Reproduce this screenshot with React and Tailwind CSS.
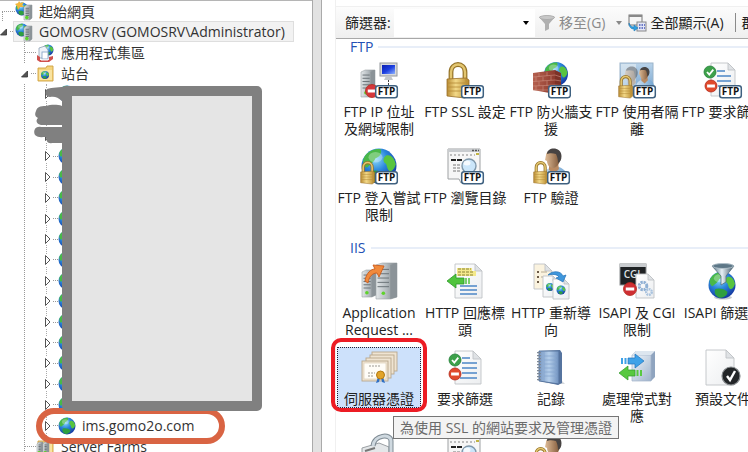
import React from "react";

const FONT =
  "font-['Open_Sans','Noto_Sans_CJK_TC',sans-serif]";

/* ---------- shared drawing parts ---------- */

function Defs() {
  return (
    <svg className="absolute h-0 w-0" aria-hidden="true">
      <defs>
        <radialGradient id="globe" cx="0.4" cy="0.3" r="0.75">
          <stop offset="0" stopColor="#8fdcf9" />
          <stop offset="0.45" stopColor="#2a86dc" />
          <stop offset="1" stopColor="#12309a" />
        </radialGradient>
        <linearGradient id="gold" x1="0" x2="1">
          <stop offset="0" stopColor="#b98c34" />
          <stop offset="0.4" stopColor="#f3d988" />
          <stop offset="1" stopColor="#b5872c" />
        </linearGradient>
        <linearGradient id="steel" x1="0" x2="1">
          <stop offset="0" stopColor="#e3e7e9" />
          <stop offset="0.5" stopColor="#b4bbbf" />
          <stop offset="1" stopColor="#7a8287" />
        </linearGradient>
        <linearGradient id="screen" x1="0" x2="1" y2="1">
          <stop offset="0" stopColor="#0b1fb0" />
          <stop offset="0.5" stopColor="#1c3fe0" />
          <stop offset="1" stopColor="#8fb4ff" />
        </linearGradient>
        <linearGradient id="brick" x1="0" x2="1">
          <stop offset="0" stopColor="#b5604f" />
          <stop offset="1" stopColor="#8d3b2e" />
        </linearGradient>
        <linearGradient id="paper" x1="0" y1="0" x2="1" y2="1">
          <stop offset="0" stopColor="#ffffff" />
          <stop offset="1" stopColor="#eceef0" />
        </linearGradient>
        <linearGradient id="sky" x1="0" y1="0" x2="0" y2="1">
          <stop offset="0" stopColor="#b9d3ea" />
          <stop offset="1" stopColor="#6f9fcb" />
        </linearGradient>
        <linearGradient id="skin" x1="0" x2="1">
          <stop offset="0" stopColor="#e0bd98" />
          <stop offset="1" stopColor="#7b5334" />
        </linearGradient>
        <linearGradient id="shirt" x1="0" x2="1">
          <stop offset="0" stopColor="#cfe2f2" />
          <stop offset="1" stopColor="#6fa3d2" />
        </linearGradient>
        <linearGradient id="book" x1="0" x2="1">
          <stop offset="0" stopColor="#7797c2" />
          <stop offset="0.5" stopColor="#b5cfeb" />
          <stop offset="1" stopColor="#6d8fbd" />
        </linearGradient>
        <linearGradient id="box" x1="0" x2="1" y2="1">
          <stop offset="0" stopColor="#f3f7fb" />
          <stop offset="1" stopColor="#9fb3cc" />
        </linearGradient>
        <linearGradient id="funnel" x1="0" x2="1">
          <stop offset="0" stopColor="#4b6a7c" />
          <stop offset="0.45" stopColor="#e6eff4" />
          <stop offset="1" stopColor="#3c5566" />
        </linearGradient>
      </defs>
    </svg>
  );
}

function Globe({ cx, cy, r }) {
  return (
    <g transform={`translate(${cx} ${cy}) scale(${r / 10})`}>
      <circle r="10" fill="url(#globe)" />
      <path d="M-8.500-5C-6-9-2-10 1-9.600 2-7 0-5-2-4.500-3-2-5-1-7 1-9 0-9.600-3-8.500-5Z" fill="#49b848" />
      <path d="M4-6C7-7 9-4 9.600-1 9 1 8 3 6 3 4 1 5-1 3-2 2-4 3-5 4-6Z" fill="#58c43f" />
      <path d="M-5 3C-2 2 2 3 4 5 4 8 1 9.500-2 9.500-5 8-6 6-5 3Z" fill="#2f9f3f" />
      <ellipse cx="-2" cy="-5" rx="4" ry="3" fill="#fff" opacity="0.3" />
    </g>
  );
}

function Lock({ x, y, s = 1 }) {
  return (
    <g transform={`translate(${x} ${y}) scale(${s})`}>
      <path d="M5 18V10C5 0 19 0 19 10V18" fill="none" stroke="#957328" strokeWidth="4.800" />
      <path d="M5 18V10C5 0 19 0 19 10V18" fill="none" stroke="#e3c670" strokeWidth="2.400" />
      <path d="M1 17 20 16 23 18V33L19 36 1 34Z" fill="url(#gold)" stroke="#9a7028" strokeWidth="0.800" />
      <path d="M2 21H19M2 25H19M2 29H19M20 17V35" stroke="#b58c38" strokeWidth="0.800" />
    </g>
  );
}

function Ftp({ x = 16 }) {
  return (
    <g>
      <rect x={x + 0.7} y="25.700" width="21.600" height="12" rx="2.500" fill="#fff" stroke="#3f6180" strokeWidth="1.500" />
      <text x={x + 11.5} y="35.400" textAnchor="middle" fontSize="10" fontWeight="700" fontFamily="Open Sans" fill="#111">
        FTP
      </text>
    </g>
  );
}

function Page({ x, y, w, h, fold = 7, fill = "url(#paper)" }) {
  return (
    <g stroke="#bfc3c6" strokeWidth="0.900">
      <path d={`M${x} ${y}H${x + w - fold}L${x + w} ${y + fold}V${y + h}H${x}Z`} fill={fill} />
      <path d={`M${x + w - fold} ${y}V${y + fold}H${x + w}Z`} fill="#dfe2e5" />
    </g>
  );
}

function Ok({ cx, cy, r = 6 }) {
  return (
    <g>
      <circle cx={cx} cy={cy} r={r} fill="#3da14a" stroke="#23803a" strokeWidth="0.800" />
      <path d={`M${cx - 3} ${cy}l2.300 2.600 4-5`} fill="none" stroke="#fff" strokeWidth="1.800" />
    </g>
  );
}

function Stop({ cx, cy, r = 6, fill = "#e04a2c" }) {
  return (
    <g>
      <circle cx={cx} cy={cy} r={r} fill={fill} stroke="#b32a1c" strokeWidth="0.800" />
      <rect x={cx - r * 0.65} y={cy - 1.5} width={r * 1.3} height="3" fill="#fff" />
    </g>
  );
}

function Tower({ x, y, w, h }) {
  return (
    <g>
      <path d={`M${x} ${y + 2}L${x + w * 0.3} ${y}H${x + w}V${y + h - 2}L${x + w * 0.7} ${y + h}H${x}Z`} fill="url(#steel)" stroke="#9aa1a5" strokeWidth="0.600" />
      <path d={`M${x + w * 0.68} ${y + 2}L${x + w} ${y}V${y + h - 2}L${x + w * 0.68} ${y + h}Z`} fill="#8b9398" />
      {[0.15, 0.27, 0.39, 0.51, 0.63].map((k) => (
        <path key={k} d={`M${x + 1.5} ${y + h * k + 1}H${x + w * 0.62}`} stroke="#6c7479" strokeWidth="1" />
      ))}
      <circle cx={x + w * 0.35} cy={y + h * 0.84} r="1.800" fill="#5fd32c" />
    </g>
  );
}

function Person({ cx, cy, s = 1 }) {
  return (
    <g transform={`translate(${cx} ${cy}) scale(${s})`}>
      <path d="M-13 25C-13 15-8 12-3 10L6 9C11 11 16 15 16 25Z" fill="url(#shirt)" />
      <path d="M-4 5H5L6 11 1 16-4 12Z" fill="#b98a62" />
      <path d="M-7-3C-7-9 7-10 7.500-2 8 4 4 10 0 10-4 10-6 6-6 3L-8 2Z" fill="url(#skin)" />
      <path d="M-6-4C-6-11 8-12 8.500-2 8.500 2 7 4 5 5 5 1 4-2 3-4 0-5-4-5-6-4Z" fill="#474342" />
    </g>
  );
}

function WebWindow() {
  return (
    <g>
      <path d="M3 3H35V33H20L16 37 14 33H3Z" fill="#f6f6f6" stroke="#9ea1a3" />
      <path d="M3 3H35V6H3Z" fill="#c9cccf" />
      <path d="M27 4.500H34" stroke="#555" strokeWidth="1.500" strokeDasharray="2 1" />
      <path d="M5 9H30" stroke="#aaa" strokeWidth="1.500" strokeDasharray="2 2" />
      <path d="M31 8h3" stroke="#c2b441" strokeWidth="2" />
      <path d="M6 14H18" stroke="#222" strokeWidth="2" strokeDasharray="5 1" />
      <path d="M8 19H16M8 22H16M8 25H16" stroke="#777" strokeWidth="1.200" strokeDasharray="3 1" />
      <circle cx="24" cy="20" r="7" fill="#cbe6fa" stroke="#7f98ab" strokeWidth="1.400" />
      <ellipse cx="22" cy="17" rx="3.500" ry="2.500" fill="#fff" opacity="0.8" />
    </g>
  );
}

/* ---------- large feature icons ---------- */

const icons = {
  ftpIp: (
    <>
      <Tower x={2} y={10} w={14} h={27} />
      <rect x="21" y="3" width="17" height="13" fill="#d8dadd" stroke="#94989c" />
      <rect x="23" y="5" width="13" height="9" fill="url(#screen)" />
      <path d="M27 16H32L34 20H25Z" fill="#c3c7ca" />
      <path d="M29.500 20V26" stroke="#444" strokeDasharray="2 1" />
      <Stop cx={13} cy={31} r={6.5} fill="#d5373b" />
      <Ftp />
    </>
  ),
  ftpSsl: (
    <>
      <Lock x={1} y={2} />
      <Ftp />
    </>
  ),
  ftpWall: (
    <>
      <Globe cx={25} cy={14} r={12} />
      <path d="M2 13 24 10V34L2 30Z" fill="url(#brick)" />
      <path d="M24 10 30 13V32L24 35Z" fill="#7d3227" />
      <path d="M2 17 24 15 30 17M2 21.500 24 20 30 21M2 26 24 25 30 25.500M2 30 24 30M8 13V17M16 12V16M5 17V21.500M12 17V21M20 16V20M8 21.500V26M16 21V26M5 26V30M12 26V31M20 25V30" stroke="#cf9181" strokeWidth="0.600" fill="none" />
      <Ftp x={17} />
    </>
  ),
  ftpUsers: (
    <>
      <rect x="3" y="3" width="33" height="31" fill="url(#sky)" stroke="#9bb4ca" />
      <path d="M4 4H19V33H4Z" fill="#e6eef4" opacity="0.6" />
      <g opacity="0.45">
        <Person cx={14} cy={14} s={0.8} />
      </g>
      <Person cx={27} cy={13} s={0.65} />
      <Lock x={1} y={15} s={0.64} />
      <Ftp />
    </>
  ),
  ftpRequest: (
    <>
      <Page x={8} y={3} w={24} h={33} />
      <path d="M14 11H22M14 16H28M14 21H28M15 26H28" stroke="#4c86c6" strokeWidth="1.600" />
      <Ok cx={7} cy={12} />
      <Stop cx={8} cy={26} />
      <Ftp />
    </>
  ),
  ftpLogon: (
    <>
      <Globe cx={20} cy={20} r={17.5} />
      <Lock x={1} y={15} s={0.64} />
      <Ftp />
    </>
  ),
  ftpBrowse: (
    <>
      <WebWindow />
      <Ftp />
    </>
  ),
  ftpAuth: (
    <>
      <Person cx={22} cy={12} />
      <Lock x={2} y={15} s={0.64} />
      <Ftp />
    </>
  ),
  arr: (
    <>
      <Tower x={3} y={9} w={14} h={27} />
      <Tower x={17} y={2} w={21} h={36} />
      <path d="M6 20C7 12 12 8 16 8L14 4 25 5 20 16 18 12C14 12 10 15 9 22Z" fill="#f18a3c" stroke="#c95b1c" strokeWidth="0.900" />
    </>
  ),
  response: (
    <>
      <Page x={10} y={3} w={27} h={34} />
      <path d="M12 7H27V10H31V15H12Z" fill="#f4e98c" />
      <path d="M13 8H26M13 11H29M13 14H29" stroke="#8a8234" strokeWidth="1" strokeDasharray="3 1" />
      <path d="M2 20 11 13V17H19V23H11V27Z" fill="#4fc43c" stroke="#2c972a" strokeWidth="0.800" />
      <path d="M21 17V23M24 17V23" stroke="#4fc43c" strokeWidth="1.500" />
      <path d="M15 25H32M15 29H32M15 33H32" stroke="#4c86c6" strokeWidth="1.600" />
    </>
  ),
  redirect: (
    <>
      <Page x={3} y={3} w={18} h={25} fill="#fbf3df" />
      <path d="M6 11H8M6 16H8M6 21H8" stroke="#6c5b48" strokeWidth="2" />
      <path d="M10 11H16M10 16H16" stroke="#b8ab93" strokeWidth="1.200" />
      <Page x={12} y={15} w={15} h={21} fold={5} />
      <Globe cx={19} cy={26} r={4} />
      <Page x={22} y={18} w={16} h={20} fold={5} />
      <Globe cx={30} cy={29} r={4.5} />
      <path d="M17 14C22 9 30 10 32 15L35 14 32 21 25 17 28 16C26 13 21 13 17 14Z" fill="#3f97dc" stroke="#2471b8" strokeWidth="0.700" />
    </>
  ),
  cgi: (
    <>
      <rect x="3" y="3" width="26" height="21" fill="#1f2224" stroke="#8c8f91" />
      <rect x="3" y="3" width="26" height="3" fill="#c9cccf" />
      <text x="15" y="17" textAnchor="middle" fontSize="10" fontWeight="600" fontFamily="Open Sans" fill="#dfe2e4">
        CGI
      </text>
      <Page x={19} y={13} w={18} h={24} fold={6} />
      <circle cx="26" cy="25" r="3.800" fill="none" stroke="#8fb0d4" strokeWidth="3" strokeDasharray="2.200 0.800" />
      <circle cx="32" cy="31" r="2.800" fill="none" stroke="#a9c3de" strokeWidth="2.400" strokeDasharray="1.800 0.700" />
      <Stop cx={13} cy={28} r={6.5} fill="#cf2f33" />
    </>
  ),
  isapi: (
    <>
      <ellipse cx="20" cy="36.500" rx="9" ry="2" fill="#c8ccd0" />
      <Globe cx={19} cy={24} r={13.5} />
      <path d="M9 5C14 2 27 2 31 5L23 15V21L18 24V15Z" fill="url(#funnel)" stroke="#4c6473" strokeWidth="0.700" />
      <ellipse cx="20" cy="5" rx="10.500" ry="2.500" fill="#5d7787" stroke="#b7c5ce" strokeWidth="0.900" />
    </>
  ),
  certs: (
    <>
      <g fill="#efe4d2" stroke="#b9a78c" strokeWidth="0.900">
        <rect x="13" y="5" width="25" height="19" />
        <rect x="11" y="8" width="24" height="19" />
        <rect x="7" y="11" width="25" height="20" />
        <rect x="3" y="14" width="26" height="20" />
      </g>
      <rect x="5" y="16" width="22" height="16" fill="#fffdf8" stroke="#dccfb8" strokeWidth="0.700" />
      <path d="M10 19H22M9 26H16M9 29H15" stroke="#9c9a94" strokeDasharray="2 1" />
      <path d="M19 30 17 36 20 35 21 31ZM22 31 23 35 26 36 24 30Z" fill="#2f6fc4" />
      <circle cx="21.500" cy="28" r="4" fill="#e2a42a" stroke="#b27a14" />
    </>
  ),
  request: (
    <>
      <Page x={10} y={4} w={26} h={33} fold={8} />
      <path d="M17 11H25M17 16H32M17 21H32M17 26H32M15 31H32" stroke="#4c86c6" strokeWidth="1.600" />
      <Ok cx={10} cy={13} r={6} />
      <Stop cx={10} cy={27} r={6} />
    </>
  ),
  log: (
    <>
      <path d="M12 36 34 37 30 33Z" fill="#d3d7db" />
      <path d="M9 4 29 3 31 6V36L27 38 9 34Z" fill="#56749f" />
      <path d="M8 4H28V37L8 34Z" fill="url(#book)" stroke="#54729c" strokeWidth="0.900" />
      <path d="M13 9H26M13 13H26M13 17H26M13 21H26M13 25H26M13 29H26M13 5V34" stroke="#86a6cf" strokeWidth="0.800" />
      <path d="M8 5V35" stroke="#7d8896" strokeWidth="4" strokeDasharray="1.200 1.800" />
    </>
  ),
  handler: (
    <>
      <path d="M15 8 19 4H38V30L34 34H15Z" fill="#8fa4bf" />
      <path d="M15 8H34V34H15Z" fill="url(#box)" stroke="#a2b3c8" strokeWidth="0.700" />
      <path d="M15 8 19 4H38L34 8Z" fill="#dde6ef" />
      <path d="M11 11H18V7L27 14 18 21V17H11Z" fill="#3fa2e8" stroke="#1f74bd" strokeWidth="0.700" />
      <path d="M5 11V17M8.500 11V17" stroke="#3fa2e8" strokeWidth="2" />
      <path d="M18 23H11V19L2 26 11 33V29H18Z" fill="#58c940" stroke="#319a2b" strokeWidth="0.700" />
      <path d="M20.500 23V29M24 23V29" stroke="#58c940" strokeWidth="2" />
    </>
  ),
  defdoc: (
    <>
      <Page x={3} y={3} w={28} h={35} fold={8} />
      <circle cx="28" cy="29" r="9" fill="#222527" stroke="#85898c" strokeWidth="1.200" />
      <path d="M24 29 27 33 32 24" fill="none" stroke="#fff" strokeWidth="2.400" />
    </>
  ),
  ssl: (
    <>
      <path d="M3 15 20 10 30 14V30H3Z" fill="#e4e7e9" stroke="#9ba0a4" />
      <path d="M14 13C15 2 32 0 32 8V26" fill="none" stroke="#7f8b94" strokeWidth="5" />
      <path d="M14 13C15 2 32 0 32 8V26" fill="none" stroke="#cfd9e0" strokeWidth="3" />
      <path d="M6 18 16 15" stroke="#777" strokeWidth="2" />
    </>
  ),
  browse: <WebWindow />,
  auth: (
    <>
      <Person cx={22} cy={12} />
      <Lock x={2} y={14} s={0.64} />
    </>
  ),
};

/* ---------- small tree icons ---------- */

function ServerIcon({ star }) {
  return (
    <svg width="18" height="20" viewBox="0 0 18 20" className="shrink-0" aria-hidden="true">
      <Globe cx={7} cy={8} r={6.5} />
      <Tower x={9} y={4} w={8} h={15} />
      {star && <path d="M4 0 5.500 2 9 1 7 4 9 6 5 6 3 9 2 5 0 3 3 2Z" fill="#f3b73c" />}
    </svg>
  );
}

function PoolIcon() {
  return (
    <svg width="18" height="18" viewBox="0 0 18 18" className="shrink-0" aria-hidden="true">
      <Globe cx={12} cy={6} r={5.5} />
      <path d="M3 4 9 2 12 6V14H3Z" fill="#eef3f8" stroke="#8b9fb5" strokeWidth="0.800" />
      <path d="M1 11 4 13V16H13V13L17 12V15L13 18H4L1 16Z" fill="#d0504d" />
      <rect x="6" y="8" width="6" height="7" fill="#fff" stroke="#7f9fc4" strokeWidth="0.800" />
      <path d="M5 16H12" stroke="#fff" />
    </svg>
  );
}

function FolderIcon({ farm }) {
  return (
    <svg width="18" height="18" viewBox="0 0 18 18" className="shrink-0" aria-hidden="true">
      <path d="M2 3H10L11 1H17V16H2Z" fill="#f4d47c" stroke="#cfa040" strokeWidth="0.900" />
      <path d="M3 5H16V15H3Z" fill="#f9e3a0" />
      {farm ? (
        <>
          <Tower x={1} y={4} w={6} h={13} />
          <Tower x={7} y={4} w={6} h={13} />
        </>
      ) : (
        <Globe cx={9} cy={10} r={4} />
      )}
    </svg>
  );
}

function SiteIcon() {
  return (
    <svg width="18" height="18" viewBox="0 0 18 18" className="shrink-0" aria-hidden="true">
      <Globe cx={9} cy={9} r={8.5} />
    </svg>
  );
}

function OpenArrow() {
  return (
    <svg width="7" height="8" viewBox="0 0 7 8" aria-hidden="true">
      <path d="M6.500 1V7H0.500Z" fill="#555" stroke="#333" strokeWidth="0.800" />
    </svg>
  );
}

function ClosedArrow() {
  return (
    <svg width="9" height="12" viewBox="0 0 9 12" className="-ml-[3px] shrink-0 bg-white" aria-hidden="true">
      <path d="M1.500 1.500 6 6 1.500 10.500Z" fill="#fff" stroke="#555" />
    </svg>
  );
}

const Stub = ({ className }) => <span className={`shrink-0 border-t border-dotted border-[#999] ${className}`} />;

function Site({ name }) {
  return (
    <li className="flex min-h-0 flex-1 items-center">
      <ClosedArrow />
      <Stub className="w-[5px]" />
      <SiteIcon />
      {name && (
        <span className="relative">
          <button className="ml-[6px] block leading-5">{name}</button>
          <span className="pointer-events-none absolute top-[-8px] -left-[40px] h-[36px] w-[189px] rounded-[18px] border-[6px] border-[#d96443]" />
        </span>
      )}
    </li>
  );
}

function Tree() {
  return (
    <nav className="relative min-w-0 flex-[0_0_312px] overflow-hidden border-t border-[#b5b5b5] text-[14px] text-[#333]">
      <ul>
        <li className="flex h-[20px] items-center">
          <span className="ml-[2px] h-[10px] w-[13px] self-end border-t border-l border-dotted border-[#999]" />
          <ServerIcon star />
          <button className="ml-[6px] whitespace-nowrap">起始網頁</button>
        </li>
        <li>
          <div className="flex h-[21px] items-center">
            <OpenArrow />
            <Stub className="ml-[3px] w-[3px]" />
            <button className="flex h-[21px] items-center gap-[6px] border border-[#dedede] bg-[#f2f2f2] pr-[8px] pl-px whitespace-nowrap">
              <ServerIcon />
              GOMOSRV (GOMOSRV\Administrator)
            </button>
          </div>
          <ul className="ml-[24px] border-l border-dotted border-[#999]">
            <li className="flex h-[21px] items-center">
              <Stub className="w-[11px]" />
              <PoolIcon />
              <button className="ml-[7px]">應用程式集區</button>
            </li>
            <li>
              <div className="flex h-[21px] items-center">
                <span className="-ml-[4px] flex h-full w-[10px] items-center bg-white">
                  <OpenArrow />
                </span>
                <Stub className="w-[5px]" />
                <FolderIcon />
                <button className="ml-[7px]">站台</button>
              </div>
              <ul className="ml-[21px] flex h-[352px] flex-col border-l border-dotted border-[#aaa]">
                {Array.from({ length: 16 }, (_, i) => (
                  <Site key={i} />
                ))}
                <Site name="ims.gomo2o.com" />
              </ul>
            </li>
            <li className="flex h-[21px] items-center">
              <Stub className="w-[11px]" />
              <FolderIcon farm />
              <button className="ml-[7px]">Server Farms</button>
            </li>
          </ul>
        </li>
      </ul>
      {/* redaction block over the site names */}
      <div className="absolute top-[85px] left-[62px] h-[325px] w-[200px] rounded-[5px] border-[10px] border-[#808080] bg-[#e5e5e5]" />
      <svg className="absolute top-[85px] left-[32px]" width="40" height="60" viewBox="0 0 40 60" aria-hidden="true">
        <path
          d="M35 0C28 2 20 1 15 3 12 7 14 11 18 11 22 10 26 11 30 15V20C24 18 18 19 14 20 8 20 5 21 4 25 2 29 4 31 6 32 3 35 5 38 9 39H30V41H9C3 40 1 45 3 49 6 52 10 51 14 51 14 55 16 58 20 57H35Z"
          fill="#808080"
        />
      </svg>
    </nav>
  );
}

/* ---------- right panel ---------- */

function FilterIcon() {
  return (
    <svg width="18" height="18" viewBox="0 0 18 18" aria-hidden="true">
      <path d="M1 3C5 1 13 1 17 3L11 10V15L7 17V10Z" fill="#b0b0b0" />
      <ellipse cx="9" cy="3.500" rx="7.500" ry="2" fill="#c7c7c7" stroke="#a5a5a5" strokeWidth="0.700" />
    </svg>
  );
}

function ShowAllIcon() {
  return (
    <svg width="19" height="18" viewBox="0 0 19 18" aria-hidden="true">
      <rect x="1" y="1" width="13" height="10" fill="#f5f5f5" stroke="#777" />
      <path d="M1 2H14" stroke="#888" strokeWidth="2" />
      <rect x="9" y="8" width="9" height="9" fill="#e3e6f5" stroke="#888" />
      <path d="M11 11H17M11 14H17" stroke="#4658b8" strokeWidth="1.500" strokeDasharray="1.500 1" />
      <path d="M1 9C2 12 4 13 6 13V11L10 14 6 17V15C3 15 1 13 1 9Z" fill="#2f9fe0" stroke="#1d78b8" strokeWidth="0.600" />
    </svg>
  );
}

const Caret = ({ className }) => (
  <span className={`block border-x-[3px] border-t-[4px] border-x-transparent ${className}`} />
);

function Toolbar() {
  return (
    <div className="mt-[6px] flex h-[33px] items-center overflow-hidden border-t border-b border-t-[#f0f0f0] border-b-[#a8a8a8] bg-linear-to-b from-[#fcfcfc] to-[#efefef] text-[14px] whitespace-nowrap text-[#222]">
      <label htmlFor="filter" className="w-[58px] shrink-0 pl-[9px]">
        篩選器:
      </label>
      <input id="filter" className="h-[28px] w-[126px] shrink-0 bg-white outline-none" />
      <button aria-label="篩選器" className="flex h-[28px] w-[15px] shrink-0 items-center bg-white pl-[3px]">
        <Caret className="border-t-black" />
      </button>
      <button className="ml-[3px] flex shrink-0 items-center gap-[3px] text-[#8b8b8b]">
        <FilterIcon />
        移至(G)
      </button>
      <button aria-label="移至" className="ml-[11px] shrink-0">
        <Caret className="border-t-[#888]" />
      </button>
      <button className="ml-[6px] flex shrink-0 items-center gap-[3px]">
        <ShowAllIcon />
        全部顯示(A)
      </button>
      <span className="ml-[11px] h-[19px] w-px shrink-0 bg-[#8a8a8a]" />
      <span className="ml-[6px] shrink-0">群組依據:</span>
    </div>
  );
}

function Feature({ icon, lines, selected, tip }) {
  return (
    <li className="relative flex h-[86px] justify-center">
      <button
        className={
          selected
            ? "relative flex h-[61px] w-[84px] flex-col items-center bg-[#cde1fb] outline-1 -outline-offset-1 outline-dotted outline-[#223]"
            : "flex w-[84px] flex-col items-center"
        }
      >
        <svg width="40" height="43" viewBox="0 0 40 43" className="shrink-0" aria-hidden="true">
          {icons[icon]}
        </svg>
        {lines.map((l) => (
          <span key={l} className="block leading-[17px] whitespace-nowrap">
            {l}
          </span>
        ))}
        {selected && (
          <span className="pointer-events-none absolute -inset-x-[6px] -top-[9px] -bottom-[4px] rounded-[10px] border-4 border-[#ec1c24]" />
        )}
      </button>
      {tip && (
        <span
          role="tooltip"
          className="absolute top-[69px] left-[57px] z-10 flex h-[23px] items-center border border-[#767676] bg-[#f3f3f3] px-[6px] whitespace-nowrap text-[#6a6a6a]"
        >
          {tip}
        </span>
      )}
    </li>
  );
}

function Group({ title, items, className = "" }) {
  return (
    <section className={className}>
      <div className="mb-[5px] flex h-[16px] items-center gap-[5px] pl-[14px]">
        <h2 className="text-[14px] leading-4 text-[#2450b4]">{title}</h2>
        <span className="h-[2px] flex-1 bg-[#e8eef8]" />
      </div>
      <ul className="grid grid-cols-[repeat(5,86px)] text-[14px] text-[#222]">
        {items.map((it) => (
          <Feature key={it.icon} {...it} />
        ))}
      </ul>
    </section>
  );
}

const ftp = [
  { icon: "ftpIp", lines: ["FTP IP 位址", "及網域限制"] },
  { icon: "ftpSsl", lines: ["FTP SSL 設定"] },
  { icon: "ftpWall", lines: ["FTP 防火牆支", "援"] },
  { icon: "ftpUsers", lines: ["FTP 使用者隔", "離"] },
  { icon: "ftpRequest", lines: ["FTP 要求篩選"] },
  { icon: "ftpLogon", lines: ["FTP 登入嘗試", "限制"] },
  { icon: "ftpBrowse", lines: ["FTP 瀏覽目錄"] },
  { icon: "ftpAuth", lines: ["FTP 驗證"] },
];

const iis = [
  { icon: "arr", lines: ["Application", "Request ..."] },
  { icon: "response", lines: ["HTTP 回應標", "頭"] },
  { icon: "redirect", lines: ["HTTP 重新導", "向"] },
  { icon: "cgi", lines: ["ISAPI 及 CGI", "限制"] },
  { icon: "isapi", lines: ["ISAPI 篩選器"] },
  { icon: "certs", lines: ["伺服器憑證"], selected: true, tip: "為使用 SSL 的網站要求及管理憑證" },
  { icon: "request", lines: ["要求篩選"] },
  { icon: "log", lines: ["記錄"] },
  { icon: "handler", lines: ["處理常式對", "應"] },
  { icon: "defdoc", lines: ["預設文件"] },
  { icon: "ssl", lines: [] },
  { icon: "browse", lines: [] },
  { icon: "auth", lines: [] },
];

export default function App() {
  return (
    <div className={`relative flex h-screen overflow-hidden bg-white ${FONT}`}>
      <Defs />
      <Tree />
      <div className="w-[10px] shrink-0 border-x border-[#aaa] bg-[#e2e2e2]" />
      <main className="ml-[13px] min-w-0 flex-1 border-l border-[#f0f0f0]">
        <Toolbar />
        <Group title="FTP" items={ftp} />
        <Group title="IIS" items={iis} className="mt-[8px]" />
      </main>
    </div>
  );
}
